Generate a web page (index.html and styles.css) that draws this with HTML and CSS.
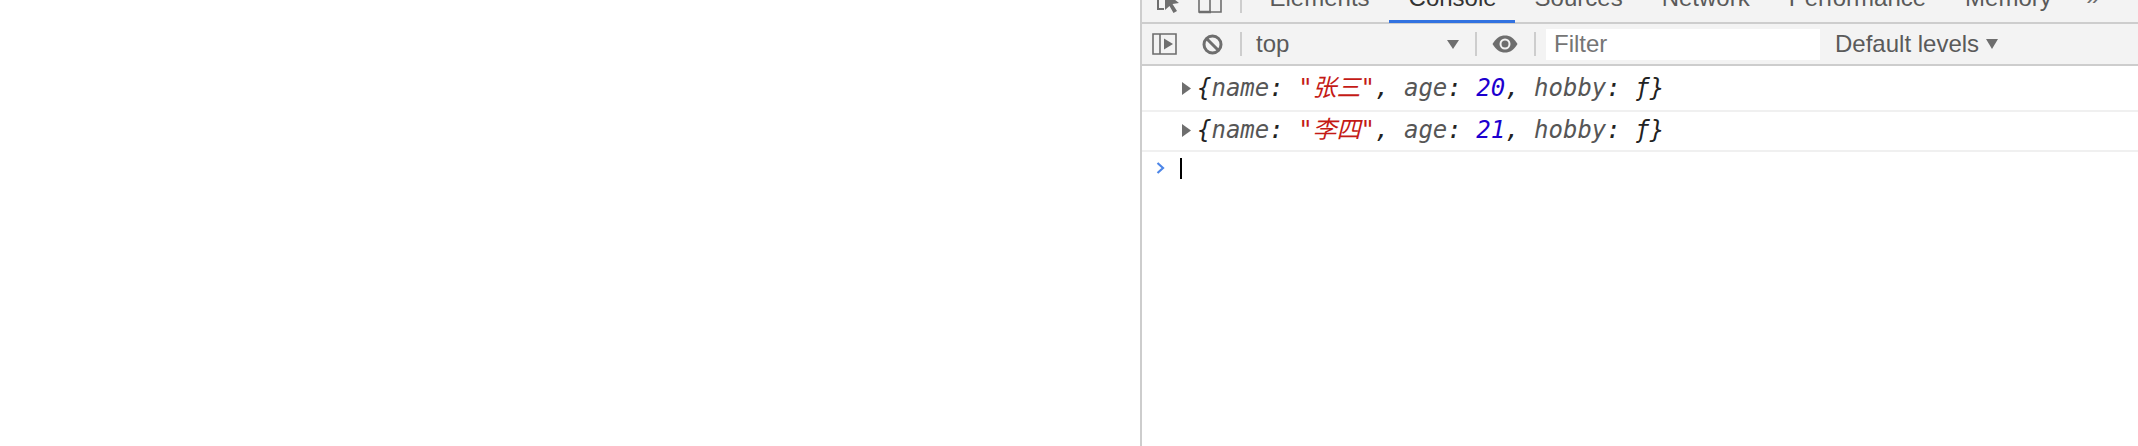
FILE: index.html
```html
<!DOCTYPE html>
<html lang="zh">
<head>
<meta charset="utf-8">
<title>Console</title>
<link rel="stylesheet" href="styles.css">
</head>
<body>
<div class="page">
  <div class="viewport"></div>
  <section class="devtools">
    <div class="tabbar">
      <div class="tool-icons">
        <svg class="ico-inspect" width="24" height="14" viewBox="0 0 24 14"><path d="M2 0V9H8" fill="none" stroke="#6e6e6e" stroke-width="2"/><path d="M9 -8L23 3L16.500 4L21 11L17.500 13L13.500 6L9 10Z" fill="#6e6e6e"/></svg>
        <svg class="ico-device" width="24" height="14" viewBox="0 0 24 14"><path d="M1 0V12H23V0M12 0V12" fill="none" stroke="#6e6e6e" stroke-width="1.600"/><path d="M1 12H13" stroke="#6e6e6e" stroke-width="2.500"/></svg>
        <span class="sep sep-top"></span>
      </div>
      <div class="tab">Elements</div>
      <div class="tab active">Console</div>
      <div class="tab">Sources</div>
      <div class="tab">Network</div>
      <div class="tab">Performance</div>
      <div class="tab">Memory</div>
      <div class="more">»</div>
    </div>
    <div class="toolbar">
      <svg class="ico-sidebar" width="26" height="22" viewBox="0 0 26 22"><path d="M1 1H24V21H1ZM8 1V21" fill="none" stroke="#6e6e6e" stroke-width="1.600"/><path d="M12 5.500L21 11L12 16.500Z" fill="#6e6e6e"/></svg>
      <svg class="ico-clear" width="21" height="21" viewBox="0 0 21 21"><circle cx="10.500" cy="10.500" r="8.500" fill="none" stroke="#6e6e6e" stroke-width="3"/><path d="M4.500 4.500L16.500 16.500" stroke="#6e6e6e" stroke-width="3"/></svg>
      <span class="sep sep-a"></span>
      <div class="context">top<svg class="caret-down" width="12" height="9" viewBox="0 0 12 9"><path d="M0 0H12L6 9Z" fill="#6e6e6e"/></svg></div>
      <span class="sep"></span>
      <svg class="ico-eye" width="26" height="18" viewBox="0 0 26 18"><path d="M0.500 9C4 3 8 0.500 13 0.500S22 3 25.500 9C22 15 18 17.500 13 17.500S4 15 0.500 9Z" fill="#6e6e6e"/><circle cx="13" cy="9" r="5.500" fill="#f3f3f3"/><circle cx="13" cy="9" r="3.500" fill="#6e6e6e"/></svg>
      <span class="sep sep-b"></span>
      <div class="filter">Filter</div>
      <div class="levels">Default levels<svg class="caret-levels" width="12" height="10" viewBox="0 0 12 10"><path d="M0 0H12L6 10Z" fill="#6e6e6e"/></svg></div>
    </div>
    <div class="log">
      <div class="row row-first">
        <svg class="tri" width="9" height="13" viewBox="0 0 9 13"><path d="M0 0L9 6.500L0 13Z" fill="#6e6e6e"/></svg>
        <span class="obj"><span class="p">{</span><span class="k">name</span><span class="p">: </span><span class="s">"张三"</span><span class="p">, </span><span class="k">age</span><span class="p">: </span><span class="n">20</span><span class="p">, </span><span class="k">hobby</span><span class="p">: ƒ}</span></span>
      </div>
      <div class="row row-second">
        <svg class="tri" width="9" height="13" viewBox="0 0 9 13"><path d="M0 0L9 6.500L0 13Z" fill="#6e6e6e"/></svg>
        <span class="obj"><span class="p">{</span><span class="k">name</span><span class="p">: </span><span class="s">"李四"</span><span class="p">, </span><span class="k">age</span><span class="p">: </span><span class="n">21</span><span class="p">, </span><span class="k">hobby</span><span class="p">: ƒ}</span></span>
      </div>
      <div class="prompt">
        <svg class="chev" width="9" height="12" viewBox="0 0 9 12"><path d="M1.500 1L7 6L1.500 11" fill="none" stroke="#4d86e8" stroke-width="2.200"/></svg>
        <span class="cursor"></span>
      </div>
    </div>
  </section>
</div>
</body>
</html>
```
FILE: styles.css
```css
html, body {
  margin: 0;
  padding: 0;
  background: #fff;
}
.page {
  display: flex;
  width: 2138px;
  height: 446px;
  overflow: hidden;
}
.viewport {
  width: 1140px;
  flex: none;
}
.devtools {
  flex: 1;
  border-left: 2px solid #cdcdcd;
  display: flex;
  flex-direction: column;
  min-width: 0;
}
.tabbar {
  height: 22px;
  flex: none;
  display: flex;
  align-items: flex-end;
  background: #f3f3f3;
  border-bottom: 2px solid #cdcdcd;
  font: 24px/28px "Liberation Sans", Arial, sans-serif;
  color: #5a5a5a;
}
.tool-icons {
  display: flex;
  align-items: flex-start;
  align-self: flex-start;
  height: 22px;
  width: 108px;
  flex: none;
}
.ico-inspect { margin-left: 14px; }
.ico-device { margin-left: 18px; }
.sep {
  width: 2px;
  height: 24px;
  background: #cdcdcd;
  flex: none;
}
.sep-top {
  height: 13px;
  margin-left: 18px;
}
.tab {
  padding: 0 19.5px 8px;
  margin-bottom: -1px;
  flex: none;
  border-bottom: 3px solid transparent;
}
.tab.active {
  padding-right: 18.5px;
  color: #333;
  border-bottom-color: #3272e0;
}
.more {
  margin-left: 15px;
  padding-bottom: 11px;
  color: #6e6e6e;
}
.toolbar {
  height: 40px;
  flex: none;
  display: flex;
  align-items: center;
  background: #f3f3f3;
  border-bottom: 2px solid #cdcdcd;
  font: 24px/28px "Liberation Sans", Arial, sans-serif;
  color: #5a5a5a;
  box-sizing: content-box;
}
.ico-sidebar { margin-left: 10px; }
.ico-clear { margin-left: 24px; }
.sep-a { margin-left: 17px; }
.context {
  width: 233px;
  padding-left: 14px;
  display: flex;
  align-items: center;
  justify-content: space-between;
  padding-right: 16px;
  box-sizing: border-box;
}
.ico-eye { margin-left: 15px; }
.sep-b { margin-left: 16px; }
.filter {
  width: 266px;
  margin-left: 10px;
  height: 31px;
  padding-left: 8px;
  background: #fff;
  color: #757575;
  line-height: 29px;
}
.levels {
  margin-left: 15px;
  display: flex;
  align-items: center;
  gap: 7px;
}
.log {
  flex: 1;
  background: #fff;
  font: italic 24px/30px "DejaVu Sans Mono", "Noto Sans CJK SC", monospace;
}
.row {
  height: 38px;
  display: flex;
  align-items: center;
  border-bottom: 2px solid #f0f0f0;
}
.row-first { height: 44px; }
.row-second {
  height: 36px;
  padding-bottom: 2px;
}
.tri {
  margin-left: 40px;
  flex: none;
}
.obj {
  margin-left: 6px;
  white-space: pre;
  color: #222;
}
.k { color: #565656; }
.s { color: #c41a16; }
.n { color: #1c00cf; }
.prompt {
  display: flex;
  align-items: center;
  height: 30px;
  padding-top: 1px;
}
.chev {
  margin-left: 14px;
  flex: none;
}
.cursor {
  width: 2px;
  height: 21px;
  margin-left: 15px;
  background: #000;
}
```
